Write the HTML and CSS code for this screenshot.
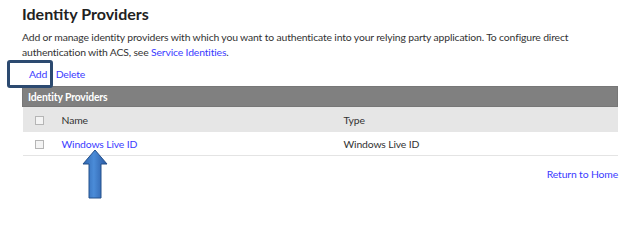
FILE: index.html
```html
<!DOCTYPE html>
<html lang="en">
<head>
  <meta charset="UTF-8" />
  <title>Identity Providers</title>
  <link rel="stylesheet" href="styles.css">
</head>
<body>
  <div class="page">
    <h1>Identity Providers</h1>
    <p class="intro">Add or manage identity providers with which you want to authenticate into your relying party application. To configure direct authentication with ACS, see <a href="#">Service Identities</a>.</p>

    <!-- toolbar -->
    <div class="toolbar">
      <a href="#" class="add-link">Add</a>
      <a href="#">Delete</a>
      <span class="highlight-box"></span>
    </div>

    <table class="grid">
      <tr class="grid-title">
        <th colspan="3">Identity Providers</th>
      </tr>
      <tr class="grid-head">
        <td class="check-col"><span class="check"></span></td>
        <td class="name-col">Name</td>
        <td>Type</td>
      </tr>
      <tr class="grid-row">
        <td class="check-col"><span class="check"></span></td>
        <td class="name-col"><a href="#">Windows Live ID</a></td>
        <td>Windows Live ID</td>
      </tr>
    </table>

    <div class="footer">
      <svg class="arrow" width="26" height="50" viewBox="0 0 26 50">
        <defs>
          <linearGradient id="arrowFill" x1="0" y1="0" x2="1" y2="0">
            <stop offset="0" stop-color="#2d64ae"/>
            <stop offset="0.45" stop-color="#4b8cd8"/>
            <stop offset="1" stop-color="#2857a0"/>
          </linearGradient>
        </defs>
        <path d="M13 1 L25 15 L19 15 L19 49 L7 49 L7 15 L1 15 Z" fill="url(#arrowFill)" stroke="#25508a" stroke-width="1"/>
      </svg>
      <a href="#">Return to Home</a>
    </div>
  </div>
</body>
</html>
```

FILE: styles.css
```css
html, body {
  margin: 0;
  padding: 0;
}

body {
  min-height: 249px;
  background: #fff;
  color: #333;
  font-family: Lato, 'Open Sans', sans-serif;
  font-size: 10.4px;
  letter-spacing: -0.15px;
}

a {
  color: #3b3bff;
  text-decoration: none;
}

.page {
  width: 596px;
  padding: 2px 0 0 22px;
}

h1 {
  margin: 0;
  font-size: 16px;
  font-weight: bold;
  color: #222;
  line-height: 24px;
  letter-spacing: 0;
}

.intro {
  margin: 4px 0 0 0;
  line-height: 15px;
}

.toolbar {
  position: relative;
  margin-top: 5px;
  padding-left: 7px;
  height: 18px;
  line-height: 18px;
}

.add-link {
  margin-right: 6px;
}

.highlight-box {
  position: absolute;
  left: -15px;
  top: -5px;
  width: 40px;
  height: 22px;
  border: 3px solid #2c4a70;
  border-radius: 3px;
}

.grid {
  width: 596px;
  border-collapse: collapse;
  margin-top: 3px;
}

.grid-title th {
  background: #808080;
  color: #fff;
  text-align: left;
  font-weight: bold;
  height: 19px;
  padding: 0 0 0 5px;
  border: 1px solid #777;
}

.grid-head td {
  background: #e6e6e6;
  height: 25px;
  padding: 0;
}

.grid-row td {
  height: 23px;
  padding: 0;
  border-bottom: 1px solid #e4e4e4;
}

.check-col {
  width: 39px;
  padding-left: 12px !important;
  box-sizing: border-box;
}

.name-col {
  width: 282px;
}

.check {
  display: inline-block;
  width: 7px;
  height: 7px;
  border: 1px solid #b5b5b5;
  background: #f4f4f4;
  vertical-align: middle;
}

.footer {
  position: relative;
  text-align: right;
  margin-top: 12px;
  height: 50px;
}

.arrow {
  position: absolute;
  left: 60px;
  top: -19px;
}
```
